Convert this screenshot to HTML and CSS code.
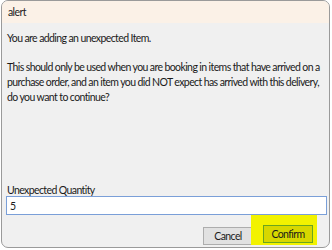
FILE: index.html
```html
<!DOCTYPE html>
<html lang="en">
<head>
  <meta charset="UTF-8" />
  <title>alert</title>
  <link rel="stylesheet" href="styles.css">
</head>
<body>
  <div class="dialog">
    <div class="titlebar">alert</div>
    <div class="content">
      <p class="lead">You are adding an unexpected Item.</p>
      <p class="msg">This should only be used when you are booking in items that have arrived on a purchase order, and an item you did NOT expect has arrived with this delivery, do you want to continue?</p>
      <div class="field">
        <label for="qty">Unexpected Quantity</label>
        <input id="qty" type="text" value="5">
      </div>
      <div class="buttons">
        <button class="btn">Cancel</button>
        <span class="highlight"><button class="btn btn-confirm">Confirm</button></span>
      </div>
    </div>
  </div>
</body>
</html>
```

FILE: styles.css
```css
body {
  margin: 0;
  background: #fff;
  font-family: Lato, "Noto Sans", sans-serif;
  font-size: 10.5px;
  letter-spacing: -0.6px;
  color: #1a1a1a;
}
.dialog {
  margin-left: 1px;
  width: 327px;
  height: 246px;
  border: 1px solid #9a9a9a;
  border-radius: 7px;
  background: #f0f0f0;
  display: flex;
  flex-direction: column;
  overflow: hidden;
}
.titlebar {
  height: 22px;
  line-height: 22px;
  padding-left: 6px;
  background: #fbf1e7;
  color: #222;
}
.content {
  flex: 1;
  display: flex;
  flex-direction: column;
  padding: 0 2px 0 4px;
}
.lead {
  margin: 8px 0 0 1px;
  line-height: 15px;
}
.msg {
  margin: 14px 0 0 1px;
  line-height: 15px;
}
.field {
  margin-top: auto;
  display: flex;
  flex-direction: column;
}
.field label {
  margin-left: 1px;
  line-height: 12px;
}
.field input {
  height: 17px;
  padding: 0 3px;
  border: 1px solid #7a9fd8;
  background: #fff;
  font: inherit;
  letter-spacing: inherit;
  color: #1a1a1a;
  outline: none;
}
.buttons {
  display: flex;
  justify-content: flex-end;
  align-items: flex-end;
  margin-right: 10px;
  margin-bottom: 2px;
}
.btn {
  width: 50px;
  height: 18px;
  padding: 0;
  border: 1px solid #adadad;
  background: #e1e1e1;
  font: inherit;
  letter-spacing: inherit;
  color: #1a1a1a;
}
.highlight {
  display: flex;
  align-items: center;
  justify-content: center;
  margin-left: -2px;
  padding: 10px 4px 2px 12px;
  background: #f2f200;
}
.btn-confirm {
  background: #d7d700;
  border-color: #6aa61e;
}
```
